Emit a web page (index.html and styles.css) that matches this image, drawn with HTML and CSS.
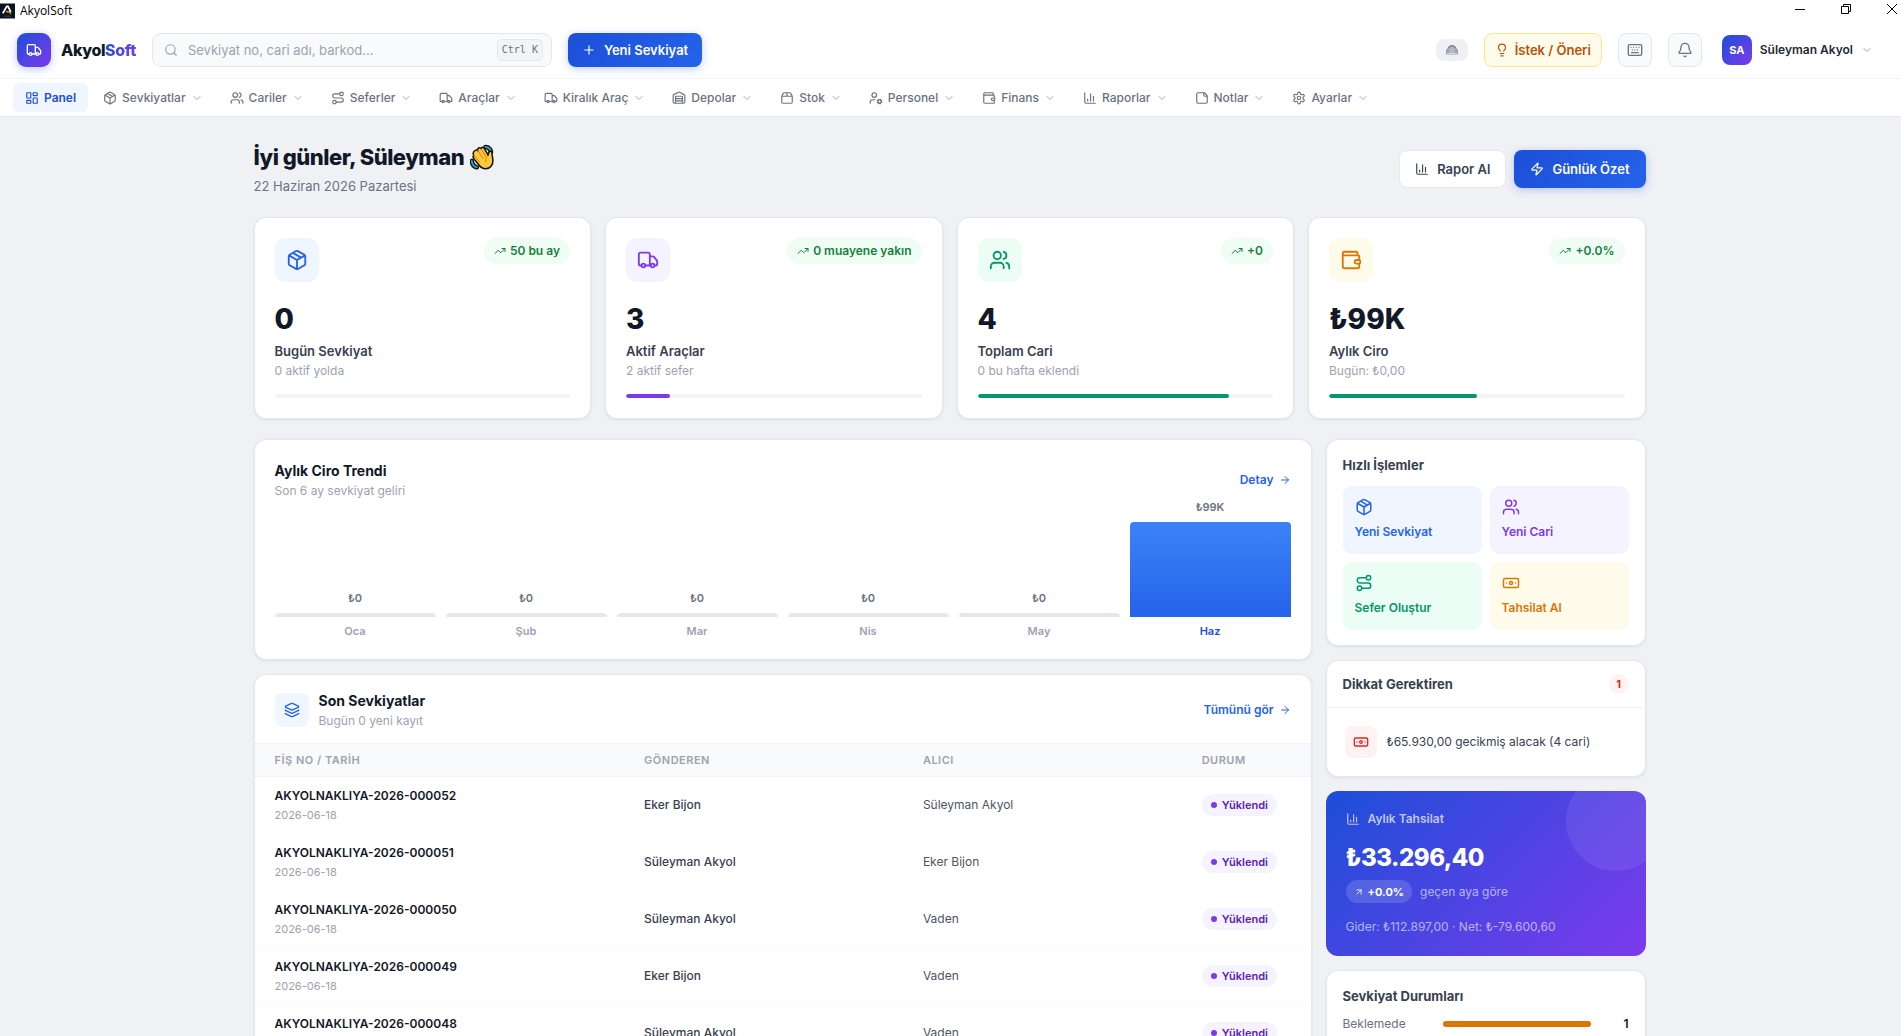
FILE: index.html
```html
<!DOCTYPE html>
<html lang="tr">
<head>
<meta charset="utf-8">
<meta name="viewport" content="width=device-width, initial-scale=1">
<title>AkyolSoft</title>
<link rel="stylesheet" href="styles.css">
</head>
<body>
<svg class="sprite" aria-hidden="true">
  <symbol id="i-truck" viewBox="0 0 24 24"><path d="M14 18V6a2 2 0 0 0-2-2H4a2 2 0 0 0-2 2v11a1 1 0 0 0 1 1h2M15 18H9M19 18h2a1 1 0 0 0 1-1v-3.65a1 1 0 0 0-.22-.624l-3.48-4.35A1 1 0 0 0 17.52 8H14"/><circle cx="17" cy="18" r="2"/><circle cx="7" cy="18" r="2"/></symbol>
  <symbol id="i-search" viewBox="0 0 24 24"><circle cx="11" cy="11" r="8"/><path d="m21 21-4.3-4.3"/></symbol>
  <symbol id="i-plus" viewBox="0 0 24 24"><path d="M5 12h14M12 5v14"/></symbol>
  <symbol id="i-bulb" viewBox="0 0 24 24"><path d="M15 14c.2-1 .7-1.700 1.500-2.500 1-.9 1.500-2.200 1.500-3.500A6 6 0 0 0 6 8c0 1 .2 2.200 1.500 3.500.7.7 1.300 1.500 1.500 2.500M9 18h6M10 22h4"/></symbol>
  <symbol id="i-keyboard" viewBox="0 0 24 24"><path d="M10 8h.01M12 12h.01M14 8h.01M16 12h.01M18 8h.01M6 8h.01M7 16h10M8 12h.01"/><rect width="20" height="16" x="2" y="4" rx="2"/></symbol>
  <symbol id="i-bell" viewBox="0 0 24 24"><path d="M10.268 21a2 2 0 0 0 3.464 0M3.262 15.326A1 1 0 0 0 4 17h16a1 1 0 0 0 .74-1.673C19.410 13.956 18 12.499 18 8A6 6 0 0 0 6 8c0 4.499-1.411 5.956-2.738 7.326"/></symbol>
  <symbol id="i-down" viewBox="0 0 24 24"><path d="m6 9 6 6 6-6"/></symbol>
  <symbol id="i-dash" viewBox="0 0 24 24"><rect width="7" height="9" x="3" y="3" rx="1"/><rect width="7" height="5" x="14" y="3" rx="1"/><rect width="7" height="9" x="14" y="12" rx="1"/><rect width="7" height="5" x="3" y="16" rx="1"/></symbol>
  <symbol id="i-package" viewBox="0 0 24 24"><path d="M11 21.730a2 2 0 0 0 2 0l7-4A2 2 0 0 0 21 16V8a2 2 0 0 0-1-1.730l-7-4a2 2 0 0 0-2 0l-7 4A2 2 0 0 0 3 8v8a2 2 0 0 0 1 1.730zM12 22V12M3.290 7 12 12l8.710-5M7.500 4.270l9 5.150"/></symbol>
  <symbol id="i-users" viewBox="0 0 24 24"><path d="M16 21v-2a4 4 0 0 0-4-4H6a4 4 0 0 0-4 4v2M16 3.128a4 4 0 0 1 0 7.744M22 21v-2a4 4 0 0 0-3-3.870"/><circle cx="9" cy="7" r="4"/></symbol>
  <symbol id="i-route" viewBox="0 0 24 24"><circle cx="6" cy="19" r="3"/><path d="M9 19h8.500a3.500 3.500 0 0 0 0-7h-11a3.500 3.500 0 0 1 0-7H15"/><circle cx="18" cy="5" r="3"/></symbol>
  <symbol id="i-warehouse" viewBox="0 0 24 24"><path d="M18 21V10a1 1 0 0 0-1-1H7a1 1 0 0 0-1 1v11M22 19a2 2 0 0 1-2 2H4a2 2 0 0 1-2-2V8a2 2 0 0 1 1.132-1.803l7.950-3.974a2 2 0 0 1 1.837 0l7.948 3.974A2 2 0 0 1 22 8zM6 13h12M6 17h12"/></symbol>
  <symbol id="i-box" viewBox="0 0 24 24"><path d="M12 3v6M16.760 3a2 2 0 0 1 1.800 1.100l2.230 4.479a2 2 0 0 1 .21.891V19a2 2 0 0 1-2 2H5a2 2 0 0 1-2-2V9.472a2 2 0 0 1 .211-.894L5.450 4.100A2 2 0 0 1 7.240 3zM3.054 9.013h17.893"/></symbol>
  <symbol id="i-usercog" viewBox="0 0 24 24"><path d="M10 15H6a4 4 0 0 0-4 4v2M14.300 16.500l.9-.4M14.300 19.500l.9.4M16.500 14.300l.4.900M16.900 20.800l-.4.900M19.500 14.300l-.4.900M19.100 20.800l.4.900M21.700 16.500l-.9-.4M21.700 19.500l-.9-.4"/><circle cx="18" cy="18" r="3"/><circle cx="9" cy="7" r="4"/></symbol>
  <symbol id="i-wallet" viewBox="0 0 24 24"><path d="M19 7V4a1 1 0 0 0-1-1H5a2 2 0 0 0 0 4h15a1 1 0 0 1 1 1v4h-3a2 2 0 0 0 0 4h3a1 1 0 0 0 1-1v-2a1 1 0 0 0-1-1M3 5v14a2 2 0 0 0 2 2h15a1 1 0 0 0 1-1v-4"/></symbol>
  <symbol id="i-chart" viewBox="0 0 24 24"><path d="M3 3v16a2 2 0 0 0 2 2h16M18 17V9M13 17V5M8 17v-3"/></symbol>
  <symbol id="i-note" viewBox="0 0 24 24"><path d="M16 3H5a2 2 0 0 0-2 2v14a2 2 0 0 0 2 2h14a2 2 0 0 0 2-2V8ZM15 3v4a2 2 0 0 0 2 2h4"/></symbol>
  <symbol id="i-gear" viewBox="0 0 24 24"><path d="M12.220 2h-.44a2 2 0 0 0-2 2v.18a2 2 0 0 1-1 1.730l-.43.250a2 2 0 0 1-2 0l-.15-.08a2 2 0 0 0-2.730.73l-.22.380a2 2 0 0 0 .73 2.730l.15.100a2 2 0 0 1 1 1.720v.51a2 2 0 0 1-1 1.740l-.15.090a2 2 0 0 0-.73 2.730l.22.380a2 2 0 0 0 2.730.73l.15-.08a2 2 0 0 1 2 0l.43.250a2 2 0 0 1 1 1.730V20a2 2 0 0 0 2 2h.44a2 2 0 0 0 2-2v-.18a2 2 0 0 1 1-1.730l.43-.25a2 2 0 0 1 2 0l.15.080a2 2 0 0 0 2.730-.73l.22-.39a2 2 0 0 0-.73-2.730l-.15-.08a2 2 0 0 1-1-1.740v-.5a2 2 0 0 1 1-1.740l.15-.09a2 2 0 0 0 .73-2.730l-.22-.38a2 2 0 0 0-2.730-.73l-.15.080a2 2 0 0 1-2 0l-.43-.25a2 2 0 0 1-1-1.730V4a2 2 0 0 0-2-2z"/><circle cx="12" cy="12" r="3"/></symbol>
  <symbol id="i-zap" viewBox="0 0 24 24"><path d="M4 14a1 1 0 0 1-.78-1.630l9.900-10.200a.5.500 0 0 1 .86.460l-1.920 6.020A1 1 0 0 0 13 10h7a1 1 0 0 1 .78 1.630l-9.900 10.200a.5.500 0 0 1-.86-.46l1.920-6.020A1 1 0 0 0 11 14z"/></symbol>
  <symbol id="i-trend" viewBox="0 0 24 24"><path d="M16 7h6v6M22 7l-8.500 8.500-5-5L2 17"/></symbol>
  <symbol id="i-right" viewBox="0 0 24 24"><path d="M5 12h14M12 5l7 7-7 7"/></symbol>
  <symbol id="i-upright" viewBox="0 0 24 24"><path d="M7 7h10v10M7 17 17 7"/></symbol>
  <symbol id="i-layers" viewBox="0 0 24 24"><path d="M12.830 2.180a2 2 0 0 0-1.660 0L2.600 6.080a1 1 0 0 0 0 1.830l8.580 3.910a2 2 0 0 0 1.660 0l8.580-3.900a1 1 0 0 0 0-1.830zM2 12a1 1 0 0 0 .58.910l8.600 3.910a2 2 0 0 0 1.650 0l8.580-3.900A1 1 0 0 0 22 12M2 17a1 1 0 0 0 .58.910l8.600 3.910a2 2 0 0 0 1.650 0l8.580-3.900A1 1 0 0 0 22 17"/></symbol>
  <symbol id="i-cash" viewBox="0 0 24 24"><rect width="20" height="12" x="2" y="6" rx="2"/><circle cx="12" cy="12" r="2"/><path d="M6 12h.01M18 12h.01"/></symbol>
</svg>

<div class="app">
  <div class="titlebar">
    <svg class="app-icon" viewBox="0 0 16 16" aria-hidden="true"><rect width="16" height="16" fill="#0b1220"/><path d="M3 10.500 7.200 3h1.300l3 6" fill="none" stroke="#fff" stroke-width="1.900"/><path d="M6.500 8.800h3.200l2 2.200" fill="none" stroke="#e0a030" stroke-width="1.500"/><path d="M4 13.500h8" stroke="#4b5563" stroke-width=".8"/></svg>
    <span class="titlebar-name">AkyolSoft</span>
    <div class="window-buttons">
      <button type="button" aria-label="Simge durumuna küçült"><svg viewBox="0 0 10 10"><path d="M0 5.500h10"/></svg></button>
      <button type="button" aria-label="Önceki boyut"><svg viewBox="0 0 10 10"><path d="M.5 2.500h7v7h-7zM2.500 2.500v-2h7v7h-2"/></svg></button>
      <button type="button" aria-label="Kapat"><svg viewBox="0 0 10 10"><path d="m0 0 10 10M10 0 0 10"/></svg></button>
    </div>
  </div>

  <header class="topbar">
    <a class="brand" href="#">
      <span class="brand-mark"><svg class="icon s16"><use href="#i-truck"/></svg></span>
      <span class="brand-name">Akyol<span class="brand-accent">Soft</span></span>
    </a>
    <label class="search">
      <svg class="icon s14"><use href="#i-search"/></svg>
      <input type="search" aria-label="Ara" placeholder="Sevkiyat no, cari adı, barkod...">
      <kbd>Ctrl K</kbd>
    </label>
    <button type="button" class="btn btn-primary"><svg class="icon s14"><use href="#i-plus"/></svg>Yeni Sevkiyat</button>
    <div class="topbar-right">
      <span class="sync-pill"><svg viewBox="0 0 12 10" aria-hidden="true"><path d="M0 9.500V5l2-2.500L4 .5h4l2 2L12 5v4.500z" fill="#9ca3af"/><path d="M4 3.500v5M6 2v6.500M8 3.500v5M1 8.500h10" stroke="#e5e7eb" stroke-width=".7"/><path d="M2 3 4 .7h4L10 3" fill="none" stroke="#6b7280" stroke-width=".9"/></svg></span>
      <button type="button" class="btn btn-suggest"><svg class="icon s14"><use href="#i-bulb"/></svg>İstek / Öneri</button>
      <button type="button" class="btn-icon" aria-label="Klavye kısayolları"><svg class="icon s16"><use href="#i-keyboard"/></svg></button>
      <button type="button" class="btn-icon" aria-label="Bildirimler"><svg class="icon s16"><use href="#i-bell"/></svg></button>
      <button type="button" class="user"><span class="avatar">SA</span>Süleyman Akyol<svg class="icon s12 muted"><use href="#i-down"/></svg></button>
    </div>
  </header>

  <nav class="menu" aria-label="Ana menü">
    <a class="active" href="#"><svg class="icon s14"><use href="#i-dash"/></svg>Panel</a>
    <a href="#"><svg class="icon s14"><use href="#i-package"/></svg>Sevkiyatlar<svg class="icon chev"><use href="#i-down"/></svg></a>
    <a href="#"><svg class="icon s14"><use href="#i-users"/></svg>Cariler<svg class="icon chev"><use href="#i-down"/></svg></a>
    <a href="#"><svg class="icon s14"><use href="#i-route"/></svg>Seferler<svg class="icon chev"><use href="#i-down"/></svg></a>
    <a href="#"><svg class="icon s14"><use href="#i-truck"/></svg>Araçlar<svg class="icon chev"><use href="#i-down"/></svg></a>
    <a href="#"><svg class="icon s14"><use href="#i-truck"/></svg>Kiralık Araç<svg class="icon chev"><use href="#i-down"/></svg></a>
    <a href="#"><svg class="icon s14"><use href="#i-warehouse"/></svg>Depolar<svg class="icon chev"><use href="#i-down"/></svg></a>
    <a href="#"><svg class="icon s14"><use href="#i-box"/></svg>Stok<svg class="icon chev"><use href="#i-down"/></svg></a>
    <a href="#"><svg class="icon s14"><use href="#i-usercog"/></svg>Personel<svg class="icon chev"><use href="#i-down"/></svg></a>
    <a href="#"><svg class="icon s14"><use href="#i-wallet"/></svg>Finans<svg class="icon chev"><use href="#i-down"/></svg></a>
    <a href="#"><svg class="icon s14"><use href="#i-chart"/></svg>Raporlar<svg class="icon chev"><use href="#i-down"/></svg></a>
    <a href="#"><svg class="icon s14"><use href="#i-note"/></svg>Notlar<svg class="icon chev"><use href="#i-down"/></svg></a>
    <a href="#"><svg class="icon s14"><use href="#i-gear"/></svg>Ayarlar<svg class="icon chev"><use href="#i-down"/></svg></a>
  </nav>

  <div class="scroll">
  <main class="page">
    <div class="page-head">
      <div>
        <h1>İyi günler, Süleyman
          <svg class="wave" viewBox="0 0 24 26" role="img" aria-label="El sallama"><g stroke-linecap="round" stroke-linejoin="round" fill="none"><path d="M15.500 3c3 .2 5 2 5.500 5M1.800 17c.2 3 2 5.500 5 6.300" stroke="#111" stroke-width="4.500"/><path d="M15.500 3c3 .2 5 2 5.500 5M1.800 17c.2 3 2 5.500 5 6.300" stroke="#2aa5b8" stroke-width="1.800"/></g><path d="M5 6.500c1-.8 2-.6 2.700.2-.4-1.400 0-2.300 1-2.800 1-.4 1.800 0 2.400.8.200-1 1-1.500 1.800-1.300.7.100 1.200.6 1.600 1.300l3.700 6.600c0-1.800.4-3.500 1.900-4 1.300-.3 2 .6 1.900 2-.1 1.800.8 4.200.9 7.200.2 4.600-2.700 8.200-7 8.300-3 0-5.200-1.200-7.200-4L3.600 14.500c-.8-1.300-.6-2.300.2-2.900-1-1.600-.9-2.600-.3-3.200.3-.7.800-1.400 1.500-1.900z" fill="#ffc83d" stroke="#111" stroke-width="1.500" stroke-linejoin="round"/><path d="m7.700 6.700 5.300 7.600M11.100 4.700l4.600 7.500M4 11.400l5.500 6.800M18.200 11.300c-2.700 2-3 4.200-2.200 6.700" fill="none" stroke="#d67d00" stroke-width="1" stroke-linecap="round"/></svg>
        </h1>
        <p class="date">22 Haziran 2026 Pazartesi</p>
      </div>
      <div class="page-actions">
        <button type="button" class="btn btn-plain"><svg class="icon s14"><use href="#i-chart"/></svg>Rapor Al</button>
        <button type="button" class="btn btn-primary btn-tall"><svg class="icon s14"><use href="#i-zap"/></svg>Günlük Özet</button>
      </div>
    </div>

    <section class="stats">
      <article class="card stat">
        <div class="stat-top"><span class="tile-icon blue"><svg class="icon s22"><use href="#i-package"/></svg></span><span class="trend"><svg class="icon s12"><use href="#i-trend"/></svg>50 bu ay</span></div>
        <strong>0</strong><h2>Bugün Sevkiyat</h2><p>0 aktif yolda</p>
        <div class="track"></div>
      </article>
      <article class="card stat">
        <div class="stat-top"><span class="tile-icon violet"><svg class="icon s22"><use href="#i-truck"/></svg></span><span class="trend"><svg class="icon s12"><use href="#i-trend"/></svg>0 muayene yakın</span></div>
        <strong>3</strong><h2>Aktif Araçlar</h2><p>2 aktif sefer</p>
        <div class="track"><div class="fill fill-violet" style="width:15%"></div></div>
      </article>
      <article class="card stat">
        <div class="stat-top"><span class="tile-icon green"><svg class="icon s22"><use href="#i-users"/></svg></span><span class="trend"><svg class="icon s12"><use href="#i-trend"/></svg>+0</span></div>
        <strong>4</strong><h2>Toplam Cari</h2><p>0 bu hafta eklendi</p>
        <div class="track"><div class="fill fill-green" style="width:85%"></div></div>
      </article>
      <article class="card stat">
        <div class="stat-top"><span class="tile-icon amber"><svg class="icon s22"><use href="#i-wallet"/></svg></span><span class="trend"><svg class="icon s12"><use href="#i-trend"/></svg>+0.0%</span></div>
        <strong>₺99K</strong><h2>Aylık Ciro</h2><p>Bugün: ₺0,00</p>
        <div class="track"><div class="fill fill-green" style="width:50%"></div></div>
      </article>
    </section>

    <div class="columns">
      <div class="col">
        <section class="card chart-card">
          <div class="card-head">
            <div><h3>Aylık Ciro Trendi</h3><p class="sub">Son 6 ay sevkiyat geliri</p></div>
            <a class="more" href="#">Detay<svg class="icon s12"><use href="#i-right"/></svg></a>
          </div>
          <div class="chart">
            <div class="month"><span>₺0</span><div class="bar" style="height:4px"></div><em>Oca</em></div>
            <div class="month"><span>₺0</span><div class="bar" style="height:4px"></div><em>Şub</em></div>
            <div class="month"><span>₺0</span><div class="bar" style="height:4px"></div><em>Mar</em></div>
            <div class="month"><span>₺0</span><div class="bar" style="height:4px"></div><em>Nis</em></div>
            <div class="month"><span>₺0</span><div class="bar" style="height:4px"></div><em>May</em></div>
            <div class="month current"><span>₺99K</span><div class="bar" style="height:95px"></div><em>Haz</em></div>
          </div>
        </section>

        <section class="card table-card">
          <div class="table-head">
            <span class="tile-icon small blue"><svg class="icon s16"><use href="#i-layers"/></svg></span>
            <div><h3>Son Sevkiyatlar</h3><p class="sub">Bugün 0 yeni kayıt</p></div>
            <a class="more" href="#">Tümünü gör<svg class="icon s12"><use href="#i-right"/></svg></a>
          </div>
          <table>
            <colgroup><col class="c-no"><col class="c-name"><col class="c-name"><col></colgroup>
            <thead><tr><th>FİŞ NO / TARİH</th><th>GÖNDEREN</th><th>ALICI</th><th>DURUM</th></tr></thead>
            <tbody>
              <tr><td><b>AKYOLNAKLIYA-2026-000052</b><small>2026-06-18</small></td><td class="sender">Eker Bijon</td><td>Süleyman Akyol</td><td><span class="status">Yüklendi</span></td></tr>
              <tr><td><b>AKYOLNAKLIYA-2026-000051</b><small>2026-06-18</small></td><td class="sender">Süleyman Akyol</td><td>Eker Bijon</td><td><span class="status">Yüklendi</span></td></tr>
              <tr><td><b>AKYOLNAKLIYA-2026-000050</b><small>2026-06-18</small></td><td class="sender">Süleyman Akyol</td><td>Vaden</td><td><span class="status">Yüklendi</span></td></tr>
              <tr><td><b>AKYOLNAKLIYA-2026-000049</b><small>2026-06-18</small></td><td class="sender">Eker Bijon</td><td>Vaden</td><td><span class="status">Yüklendi</span></td></tr>
              <tr><td><b>AKYOLNAKLIYA-2026-000048</b><small>2026-06-18</small></td><td class="sender">Süleyman Akyol</td><td>Vaden</td><td><span class="status">Yüklendi</span></td></tr>
            </tbody>
          </table>
        </section>
      </div>

      <aside class="col">
        <section class="card quick">
          <h4>Hızlı İşlemler</h4>
          <div class="quick-grid">
            <a class="blue" href="#"><svg class="icon s18"><use href="#i-package"/></svg>Yeni Sevkiyat</a>
            <a class="violet" href="#"><svg class="icon s18"><use href="#i-users"/></svg>Yeni Cari</a>
            <a class="green" href="#"><svg class="icon s18"><use href="#i-route"/></svg>Sefer Oluştur</a>
            <a class="amber" href="#"><svg class="icon s18"><use href="#i-cash"/></svg>Tahsilat Al</a>
          </div>
        </section>

        <section class="card">
          <div class="alert-head"><h4>Dikkat Gerektiren</h4><span class="count">1</span></div>
          <div class="alert"><span class="alert-icon"><svg class="icon s16"><use href="#i-cash"/></svg></span>₺65.930,00 gecikmiş alacak (4 cari)</div>
        </section>

        <section class="income">
          <h4><svg class="icon s14"><use href="#i-chart"/></svg>Aylık Tahsilat</h4>
          <strong>₺33.296,40</strong>
          <p class="income-change"><span class="income-pill"><svg class="icon s10"><use href="#i-upright"/></svg>+0.0%</span>geçen aya göre</p>
          <p class="income-net">Gider: ₺112.897,00 · Net: ₺-79.600,60</p>
        </section>

        <section class="card states">
          <h4>Sevkiyat Durumları</h4>
          <div class="state"><span>Beklemede</span><div class="state-track"><div class="fill fill-amber" style="width:100%"></div></div><b>1</b></div>
        </section>
      </aside>
    </div>
  </main>
  </div>
</div>
</body>
</html>
```
FILE: styles.css
```css
* { box-sizing: border-box; }

body {
  margin: 0;
  background: #f0f1f5;
  color: #111827;
  font-family: Inter, "Liberation Sans", sans-serif;
  font-size: 13px;
  line-height: 20px;
}

h1, h2, h3, h4, p { margin: 0; }
a { color: inherit; text-decoration: none; }
button { font: inherit; color: inherit; cursor: pointer; }

.sprite { position: absolute; width: 0; height: 0; }

.icon {
  flex: none;
  fill: none;
  stroke: currentColor;
  stroke-width: 2;
  stroke-linecap: round;
  stroke-linejoin: round;
}
.s10 { width: 10px; height: 10px; }
.s12 { width: 12px; height: 12px; }
.s14 { width: 14px; height: 14px; }
.s16 { width: 16px; height: 16px; }
.s18 { width: 18px; height: 18px; }
.s22 { width: 22px; height: 22px; }
.muted { color: #9ca3af; }

.app {
  display: flex;
  flex-direction: column;
  height: 100vh;
  overflow: hidden;
}

/* Window title bar */
.titlebar {
  display: flex;
  flex: none;
  align-items: center;
  gap: 5px;
  height: 22px;
  padding-right: 4px;
  background: #fff;
}
.app-icon { width: 15px; height: 16px; }
.titlebar-name {
  color: #000;
  font: 12px/16px "Open Sans", "Noto Sans", sans-serif;
}
.window-buttons {
  display: flex;
  gap: 36px;
  margin-left: auto;
}
.window-buttons button {
  display: flex;
  padding: 0;
  border: 0;
  background: none;
}
.window-buttons svg {
  width: 10px;
  height: 10px;
  margin-bottom: 4px;
  overflow: visible;
  fill: none;
  stroke: #000;
}

/* Top bar */
.topbar {
  display: flex;
  flex: none;
  align-items: center;
  gap: 16px;
  height: 57px;
  padding: 0 17px;
  border-bottom: 1px solid #f3f4f6;
  background: #fff;
}
.brand { display: flex; align-items: center; gap: 10px; }
.brand-mark {
  display: grid;
  place-items: center;
  width: 34px;
  height: 34px;
  border-radius: 9px;
  background: linear-gradient(135deg, #1d4ed8, #7c3aed);
  box-shadow: 0 2px 8px rgba(29, 78, 216, .3);
  color: #fff;
}
.brand-name { font-size: 16px; font-weight: 800; letter-spacing: -.4px; }
.brand-accent {
  background: linear-gradient(135deg, #1d4ed8, #7c3aed);
  background-clip: text;
  color: transparent;
}
.search {
  display: flex;
  align-items: center;
  gap: 10px;
  width: 400px;
  height: 34px;
  padding: 0 8px 0 11px;
  border: 1px solid #e5e7eb;
  border-radius: 9px;
  background: #f9fafb;
  color: #9ca3af;
}
.search input {
  flex: 1;
  min-width: 0;
  padding: 0;
  border: 0;
  outline: 0;
  background: none;
  font: inherit;
}
.search input::placeholder { color: #9ca3af; opacity: 1; }
.search kbd {
  padding: 0 4px;
  border: 1px solid #e5e7eb;
  border-radius: 5px;
  background: #f3f4f6;
  color: #6b7280;
  font: 10px/20px "DejaVu Sans Mono", "Liberation Mono", monospace;
}
.btn {
  display: flex;
  align-items: center;
  gap: 8px;
  height: 34px;
  padding: 0 14px;
  border: 0;
  border-radius: 8px;
  font-weight: 600;
  white-space: nowrap;
}
.btn-primary {
  background: linear-gradient(135deg, #1d4ed8, #2563eb);
  box-shadow: 0 2px 8px rgba(37, 99, 235, .3);
  color: #fff;
}
.topbar-right {
  display: flex;
  align-items: center;
  gap: 16px;
  margin-left: auto;
}
.sync-pill {
  display: grid;
  place-items: center;
  width: 32px;
  height: 22px;
  border-radius: 8px;
  background: #f0f1f5;
}
.sync-pill svg { width: 12px; height: 10px; }
.btn-suggest {
  gap: 6px;
  padding: 0 10px;
  border: 1px solid #fde68a;
  background: #fffbeb;
  color: #b45309;
}
.btn-icon {
  display: grid;
  place-items: center;
  width: 34px;
  height: 34px;
  padding: 0;
  border: 1px solid #e5e7eb;
  border-radius: 8px;
  background: #f9fafb;
  color: #6b7280;
}
.user {
  display: flex;
  align-items: center;
  gap: 8px;
  padding: 0 11px 0 4px;
  border: 0;
  background: none;
  color: #1f2937;
  font-size: 12px;
  font-weight: 600;
}
.avatar {
  display: grid;
  place-items: center;
  width: 30px;
  height: 30px;
  border-radius: 8px;
  background: linear-gradient(135deg, #1d4ed8, #7c3aed);
  color: #fff;
  font-size: 11px;
  font-weight: 700;
}

/* Menu */
.menu {
  display: flex;
  flex: none;
  align-items: center;
  gap: 3px;
  height: 38px;
  padding: 0 13px;
  border-bottom: 1px solid #e5e7eb;
  background: #fff;
  color: #6b7280;
  font-size: 12px;
  font-weight: 500;
}
.menu a {
  display: flex;
  align-items: center;
  gap: 5px;
  height: 29px;
  padding: 0 12px;
  border-radius: 7px;
  white-space: nowrap;
}
.menu .active { background: #eff6ff; color: #1d4ed8; font-weight: 600; }
.menu .chev { width: 12px; height: 12px; opacity: .6; }

.scroll {
  flex: 1;
  min-height: 0;
  padding-right: 2px;
  overflow: hidden;
}
.page {
  max-width: 1440px;
  margin: 0 auto;
  padding: 24px;
}
.page-head {
  display: flex;
  align-items: center;
  justify-content: space-between;
  margin-bottom: 20px;
}
h1 {
  display: flex;
  align-items: center;
  gap: 6px;
  font-size: 22px;
  font-weight: 800;
  line-height: 32px;
  letter-spacing: -.5px;
}
.wave { width: 24px; height: 26px; }
.date { padding: 3px 0 1px; color: #6b7280; }
.page-actions { display: flex; gap: 8px; }
.btn-plain {
  height: 38px;
  padding: 0 15px;
  border: 1px solid #e5e7eb;
  background: #fff;
  color: #374151;
}
.btn-tall { height: 38px; padding: 0 16px; }

.card {
  border: 1px solid #e5e7eb;
  border-radius: 12px;
  background: #fff;
  box-shadow: 0 1px 3px rgba(0, 0, 0, .08);
}

.blue { background: #eff6ff; color: #2563eb; }
.violet { background: #f5f3ff; color: #7c3aed; }
.green { background: #ecfdf5; color: #059669; }
.amber { background: #fffbeb; color: #d97706; }

.tile-icon {
  display: grid;
  flex: none;
  place-items: center;
  width: 44px;
  height: 44px;
  border-radius: 11px;
}
.tile-icon.small { width: 34px; height: 34px; border-radius: 8px; }

/* Stat cards */
.stats {
  display: grid;
  grid-template-columns: repeat(4, 1fr);
  gap: 14px;
  margin-bottom: 20px;
}
.stat { padding: 20px; }
.stat-top {
  display: flex;
  align-items: flex-start;
  justify-content: space-between;
  margin-bottom: 20px;
}
.trend {
  display: flex;
  align-items: center;
  gap: 4px;
  height: 26px;
  padding: 0 10px;
  border-radius: 13px;
  background: #f0fdf4;
  color: #15803d;
  font-size: 12px;
  font-weight: 600;
}
.stat strong {
  display: block;
  font-size: 28px;
  font-weight: 800;
  line-height: 34px;
}
.stat h2 {
  margin-top: 5px;
  color: #374151;
  font-size: 13px;
  font-weight: 600;
  line-height: 20px;
}
.stat p { color: #9ca3af; font-size: 12px; }
.track {
  height: 4px;
  margin-top: 13px;
  border-radius: 2px;
  background: #f3f4f6;
  overflow: hidden;
}
.fill { height: 100%; border-radius: inherit; }
.fill-violet { background: #7c3aed; }
.fill-green { background: #059669; }
.fill-amber { background: #d97706; }

/* Two columns */
.columns {
  display: grid;
  grid-template-columns: minmax(0, 1fr) 320px;
  gap: 14px;
}
.col {
  display: flex;
  flex-direction: column;
  gap: 14px;
}
h3 { font-size: 14px; font-weight: 700; line-height: 22px; }
h4 { color: #374151; font-size: 13px; font-weight: 700; line-height: 20px; }
.sub { color: #9ca3af; font-size: 12px; line-height: 18px; }
.more {
  display: flex;
  align-items: center;
  gap: 5px;
  color: #2563eb;
  font-size: 12px;
  font-weight: 600;
}

.chart-card { padding: 20px; }
.card-head {
  display: flex;
  align-items: center;
  justify-content: space-between;
}
.chart { display: flex; align-items: flex-end; gap: 10px; height: 139px; }
.month {
  display: flex;
  flex: 1;
  flex-direction: column;
  color: #9ca3af;
  font-size: 11px;
  font-weight: 600;
  line-height: 16px;
  text-align: center;
}
.month span { margin-bottom: 7px; color: #6b7280; }
.month em { margin-top: 6px; font-style: normal; }
.bar { border-radius: 4px 4px 0 0; background: #e5e7eb; }
.current .bar { background: linear-gradient(#3b82f6, #2563eb); }
.current em { color: #1d4ed8; }

/* Shipments table */
.table-card { overflow: hidden; }
.table-head {
  display: flex;
  align-items: center;
  gap: 10px;
  padding: 15px 20px 13px;
}
.table-head .more { margin-left: auto; }
table { width: 100%; border-collapse: collapse; table-layout: fixed; }
.c-no { width: 35%; }
.c-name { width: 26.4%; }
th {
  height: 33px;
  padding: 0 20px;
  border-top: 1px solid #f3f4f6;
  border-bottom: 1px solid #f3f4f6;
  background: #f9fafb;
  color: #9ca3af;
  font-size: 11px;
  font-weight: 600;
  letter-spacing: .5px;
  text-align: left;
}
td {
  height: 57px;
  padding: 0 20px;
  border-bottom: 1px solid #f9fafb;
  color: #4b5563;
  font-size: 12px;
  white-space: nowrap;
}
td b { display: block; color: #111827; font-weight: 600; }
td small { display: block; color: #9ca3af; font-size: 11px; line-height: 18px; }
td.sender { color: #374151; font-weight: 500; }
.status {
  display: inline-flex;
  align-items: center;
  gap: 5px;
  height: 22px;
  padding: 0 9px;
  border-radius: 11px;
  background: #f5f3ff;
  color: #5b21b6;
  font-size: 11px;
  font-weight: 600;
}
.status::before {
  width: 6px;
  height: 6px;
  border-radius: 50%;
  background: #7c3aed;
  content: "";
}

/* Side column */
.quick { padding: 15px 16px; }
.quick-grid {
  display: grid;
  grid-template-columns: 1fr 1fr;
  gap: 8px;
  margin-top: 11px;
}
.quick-grid a {
  display: flex;
  flex-direction: column;
  gap: 6px;
  padding: 12px;
  border-radius: 9px;
  font-size: 12px;
  font-weight: 600;
}
.alert-head {
  display: flex;
  align-items: center;
  justify-content: space-between;
  padding: 13px 16px;
  border-bottom: 1px solid #f3f4f6;
}
.count {
  min-width: 20px;
  border-radius: 10px;
  background: #fef2f2;
  color: #dc2626;
  font-size: 11px;
  font-weight: 700;
  text-align: center;
}
.alert {
  display: flex;
  align-items: center;
  gap: 10px;
  padding: 18px;
  color: #374151;
  font-size: 12px;
}
.alert-icon {
  display: grid;
  flex: none;
  place-items: center;
  width: 32px;
  height: 32px;
  border-radius: 8px;
  background: #fef2f2;
  color: #dc2626;
}

.income {
  position: relative;
  padding: 18px 20px 19px;
  border-radius: 12px;
  background: linear-gradient(135deg, #1d4ed8, #7c3aed);
  color: rgba(255, 255, 255, .6);
  font-size: 12px;
  overflow: hidden;
}
.income::after {
  position: absolute;
  top: -20px;
  right: -20px;
  width: 100px;
  height: 100px;
  border-radius: 50%;
  background: rgba(255, 255, 255, .08);
  content: "";
}
.income h4 {
  display: flex;
  align-items: center;
  gap: 8px;
  color: rgba(255, 255, 255, .7);
  font-size: 12px;
  font-weight: 600;
}
.income strong {
  display: block;
  margin-top: 12px;
  color: #fff;
  font-size: 24px;
  font-weight: 800;
  line-height: 34px;
  letter-spacing: -.5px;
}
.income-change {
  display: flex;
  align-items: center;
  gap: 8px;
  margin-top: 5px;
}
.income-pill {
  display: flex;
  align-items: center;
  gap: 4px;
  height: 23px;
  padding: 0 8px;
  border-radius: 12px;
  background: rgba(255, 255, 255, .15);
  color: #fff;
  font-size: 11px;
  font-weight: 700;
}
.income-net { margin-top: 14px; }

.states { padding: 15px 16px; }
.state {
  display: flex;
  align-items: center;
  margin-top: 8px;
  color: #6b7280;
  font-size: 12px;
}
.state span { width: 100px; }
.state-track { flex: 1; height: 6px; border-radius: 3px; background: #f3f4f6; }
.state b { width: 38px; color: #111827; font-weight: 600; text-align: right; }
```
